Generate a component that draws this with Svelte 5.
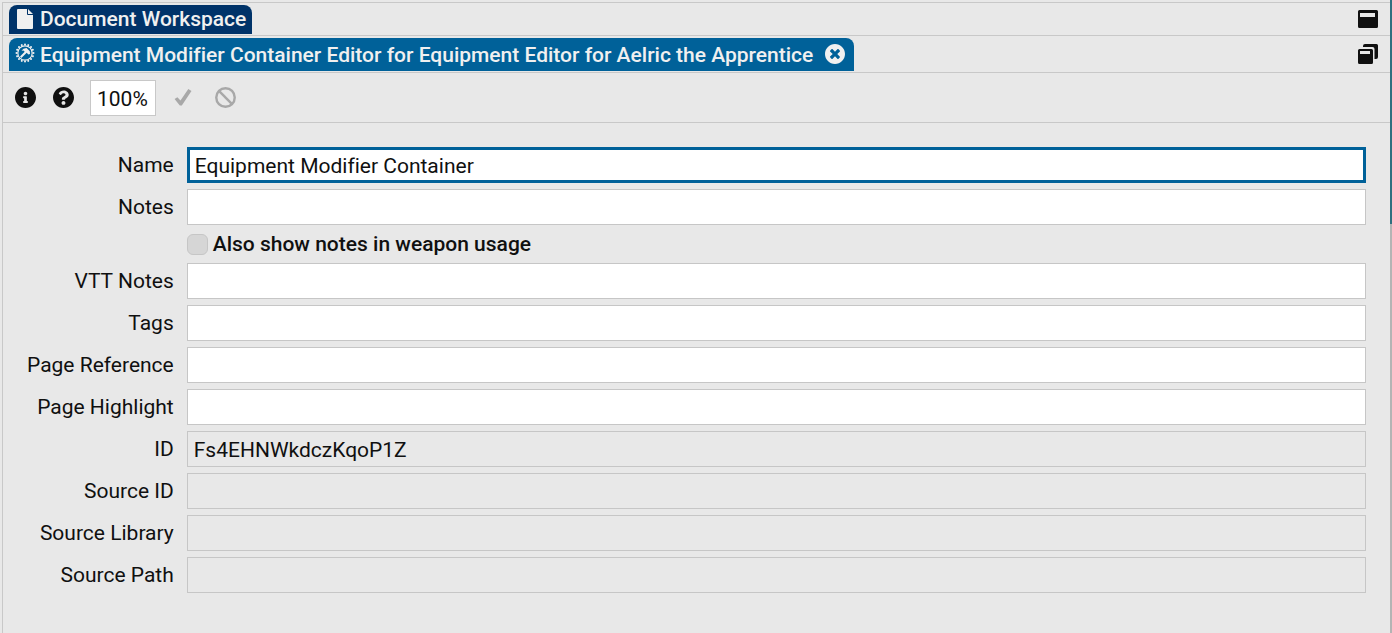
<script>
  let zoom = $state('100%');
  let showInWeapon = $state(false);
  let fields = $state([
    { id: 'name', label: 'Name', value: 'Equipment Modifier Container', focused: true },
    { id: 'notes', label: 'Notes', value: '' },
    { id: 'vtt', label: 'VTT Notes', value: '' },
    { id: 'tags', label: 'Tags', value: '' },
    { id: 'page-ref', label: 'Page Reference', value: '' },
    { id: 'page-hl', label: 'Page Highlight', value: '' },
    { id: 'id', label: 'ID', value: 'Fs4EHNWkdczKqoP1Z', locked: true },
    { id: 'source-id', label: 'Source ID', value: '', locked: true },
    { id: 'source-lib', label: 'Source Library', value: '', locked: true },
    { id: 'source-path', label: 'Source Path', value: '', locked: true }
  ]);
  const teeth = Array.from({ length: 16 }, (_, i) => i * 22.5);
</script>

<div class="window">
  <main class="dock">
    <header class="tabs outer">
      <button class="tab workspace">
        <svg class="file" viewBox="0 0 16 20" aria-hidden="true">
          <path d="M10 0v5q0 1 1 1h5v13q0 1-1 1H1q-1 0-1-1V1q0-1 1-1zM11 0l5 5h-5z" />
        </svg>
        <span>Document Workspace</span>
      </button>
      <button class="icon corner" aria-label="Maximize">
        <svg viewBox="0 0 20 20" aria-hidden="true">
          <path fill-rule="evenodd" d="M1.500 1h17q1.500 0 1.500 1.500v15q0 1.500-1.500 1.500h-17Q0 19 0 17.500v-15Q0 1 1.500 1zM2 4v4h15V4z" />
        </svg>
      </button>
    </header>

    <header class="tabs inner">
      <div class="tab editor">
        <svg class="gear" viewBox="0 0 20 20" aria-hidden="true">
          <circle cx="10" cy="10" r="7.2" fill="none" stroke="currentColor" stroke-width="1.2" />
          {#each teeth as angle}
            <circle cx="10" cy="1.5" r="1" transform="rotate({angle} 10 10)" />
          {/each}
          <path d="M5 13.500l4.700-4.700-1.300-1.300-1.900.200Q8 5 11.500 5l3.300 3.200.200 2.800-1.600.600-1.700-1.800-5.300 5.100z" />
        </svg>
        <span>Equipment Modifier Container Editor for Equipment Editor for Aelric the Apprentice</span>
        <button class="icon close" aria-label="Close">
          <svg viewBox="8 8 496 496" aria-hidden="true">
            <path d="M256 8C119 8 8 119 8 256s111 248 248 248 248-111 248-248S393 8 256 8zm121.6 313.1c4.7 4.7 4.7 12.3 0 17L338 377.6c-4.7 4.7-12.3 4.7-17 0L256 312l-65.1 65.6c-4.7 4.7-12.3 4.7-17 0L134.4 338c-4.7-4.7-4.7-12.3 0-17l65.6-65-65.6-65.1c-4.7-4.7-4.7-12.3 0-17l39.6-39.6c4.7-4.7 12.3-4.7 17 0l65 65.7 65.1-65.6c4.7-4.7 12.3-4.7 17 0l39.6 39.6c4.7 4.7 4.7 12.3 0 17L312 256l65.6 65.1z" />
          </svg>
        </button>
      </div>
      <button class="icon corner" aria-label="Restore">
        <svg viewBox="0 0 20 20" aria-hidden="true">
          <path d="M5 3V2q0-2 2-2h11.500q1.500 0 1.500 1.500v11.500q0 2-2 2h-1.500V5q0-2-2-2z" />
          <path fill-rule="evenodd" d="M1.500 5h12q1.500 0 1.500 1.500v12q0 1.500-1.500 1.500h-12Q0 20 0 18.500v-12Q0 5 1.500 5zM2 7v3h10V7z" />
        </svg>
      </button>
    </header>

    <div class="toolbar">
      <button class="icon" aria-label="Info">
        <svg viewBox="8 8 496 496" aria-hidden="true">
          <path d="M256 8C119.043 8 8 119.083 8 256c0 136.997 111.043 248 248 248s248-111.003 248-248C504 119.083 392.957 8 256 8zm0 110c23.196 0 42 18.804 42 42s-18.804 42-42 42-42-18.804-42-42 18.804-42 42-42zm56 254c0 6.627-5.373 12-12 12h-88c-6.627 0-12-5.373-12-12v-24c0-6.627 5.373-12 12-12h12v-64h-12c-6.627 0-12-5.373-12-12v-24c0-6.627 5.373-12 12-12h64c6.627 0 12 5.373 12 12v100h12c6.627 0 12 5.373 12 12v24z" />
        </svg>
      </button>
      <button class="icon" aria-label="Help">
        <svg viewBox="8 8 496 496" aria-hidden="true">
          <path d="M504 256c0 136.997-111.043 248-248 248S8 392.997 8 256C8 119.083 119.043 8 256 8s248 111.083 248 248zM262.655 90c-54.497 0-89.255 22.957-116.549 63.758-3.536 5.286-2.353 12.415 2.715 16.258l34.699 26.31c5.205 3.947 12.621 3.008 16.665-2.122 17.864-22.658 30.113-35.797 57.303-35.797 20.429 0 45.698 13.148 45.698 32.958 0 14.976-12.363 22.667-32.534 33.976C247.128 238.528 216 254.941 216 296v4c0 6.627 5.373 12 12 12h56c6.627 0 12-5.373 12-12v-1.333c0-28.462 83.186-29.647 83.186-106.667 0-58.002-60.165-102-116.531-102zM256 338c-25.365 0-46 20.635-46 46 0 25.364 20.635 46 46 46s46-20.636 46-46c0-25.365-20.635-46-46-46z" />
        </svg>
      </button>
      <input class="zoom" aria-label="Zoom" bind:value={zoom} />
      <button class="icon" aria-label="Apply" disabled>
        <svg viewBox="0 0 20 20" aria-hidden="true">
          <path d="M1.500 11.500l2.700-1.800 2.900 3.200L14.600 2l3 1.800L8.400 17.600H6.500z" />
        </svg>
      </button>
      <button class="icon ban" aria-label="Discard" disabled>
        <svg viewBox="0 0 20 20" aria-hidden="true" fill="none" stroke="currentColor" stroke-width="2.3">
          <circle cx="10" cy="10" r="8.800" />
          <path d="M4 4l12 12" />
        </svg>
      </button>
    </div>

    <form class="form" onsubmit={(e) => e.preventDefault()}>
      {#each fields as field}
        <label class="caption" for={field.id}>{field.label}</label>
        <input
          class="field"
          class:focused={field.focused}
          class:locked={field.locked}
          id={field.id}
          readonly={field.locked}
          bind:value={field.value}
        />
        {#if field.id === 'notes'}
          <label class="check">
            <input type="checkbox" bind:checked={showInWeapon} />
            <span>Also show notes in weapon usage</span>
          </label>
        {/if}
      {/each}
    </form>
  </main>
  <aside class="backdrop" aria-hidden="true"><i></i></aside>
</div>

<style>
  :global(body) {
    margin: 0;
    background: #e8e8e8;
  }
  .window {
    display: flex;
    min-height: 100vh;
    box-sizing: border-box;
    padding-left: 2px;
    color: #101010;
    font: 400 21px/26px Roboto, sans-serif;
    font-variant-ligatures: none;
  }
  .dock {
    flex: 1;
    min-width: 0;
    margin-top: 2px;
    border-left: 1px solid #c8c8c8;
    border-top: 1px solid #c8c8c8;
  }
  .backdrop {
    display: flex;
    flex-direction: column;
    width: 2px;
    background: #b4b4b4;
  }
  .backdrop i {
    height: 224px;
    background: #307080;
  }
  button,
  input {
    box-sizing: border-box;
    margin: 0;
    font: inherit;
    font-variant-ligatures: none;
    color: inherit;
  }
  button {
    border: 0;
    padding: 0;
    background: none;
  }
  svg {
    display: block;
    fill: currentColor;
  }
  svg[fill='none'] {
    fill: none;
  }
  .tabs {
    display: flex;
    align-items: flex-end;
    justify-content: space-between;
    box-sizing: border-box;
    padding: 0 12px 1px 6px;
    border-bottom: 1px solid #c8c8c8;
  }
  .outer {
    height: 33px;
  }
  .inner {
    height: 37px;
  }
  .tab {
    display: flex;
    align-items: center;
    box-sizing: border-box;
    border-radius: 8px 8px 0 0;
    color: #f0f0f0;
    font-weight: 500;
    white-space: nowrap;
  }
  .workspace {
    height: 29px;
    gap: 7px;
    padding: 0 6px 2px 8px;
    background: #003369;
  }
  .editor {
    height: 33px;
    gap: 5px;
    padding: 0 9px 0 6px;
    background: #006199;
  }
  .file {
    width: 16px;
    height: 20px;
  }
  .gear {
    width: 20px;
    height: 20px;
    margin-bottom: 3px;
  }
  .icon {
    flex: none;
    width: 21px;
    height: 21px;
  }
  .icon svg {
    width: 100%;
    height: 100%;
  }
  .icon:disabled {
    color: #a8a8a8;
  }
  .close {
    width: 20px;
    height: 20px;
    margin: 0 0 2px 7px;
  }
  .corner {
    width: 20px;
    height: 20px;
    align-self: center;
  }
  .toolbar {
    display: flex;
    align-items: center;
    gap: 17px;
    box-sizing: border-box;
    height: 50px;
    padding: 0 12px;
    border-bottom: 1px solid #c8c8c8;
  }
  .zoom {
    width: 66px;
    height: 36px;
    margin-left: -1px;
    padding: 2px 6px 0;
    border: 1px solid #c8c8c8;
    background: #fff;
    outline: 0;
  }
  .ban {
    margin-left: 4px;
  }
  .form {
    display: grid;
    grid-template-columns: max-content 1fr;
    align-items: center;
    gap: 6px 13px;
    padding: 24px;
  }
  .caption {
    text-align: right;
  }
  .field {
    width: 100%;
    min-width: 0;
    height: 36px;
    padding: 2px 6px 0;
    border: 1px solid #c6c6c6;
    border-radius: 0;
    background: #fff;
    outline: 0;
  }
  .focused {
    padding: 2px 5px 0;
    border: 3px solid #006199;
  }
  .locked {
    background: #e8e8e8;
  }
  .check {
    grid-column: 2;
    display: flex;
    align-items: center;
    gap: 5px;
    justify-self: start;
    font-weight: 500;
  }
  .check input {
    appearance: none;
    width: 21px;
    height: 21px;
    border: 1px solid #c6c6c6;
    border-radius: 6px;
    background: #d6d6d6;
  }
</style>
